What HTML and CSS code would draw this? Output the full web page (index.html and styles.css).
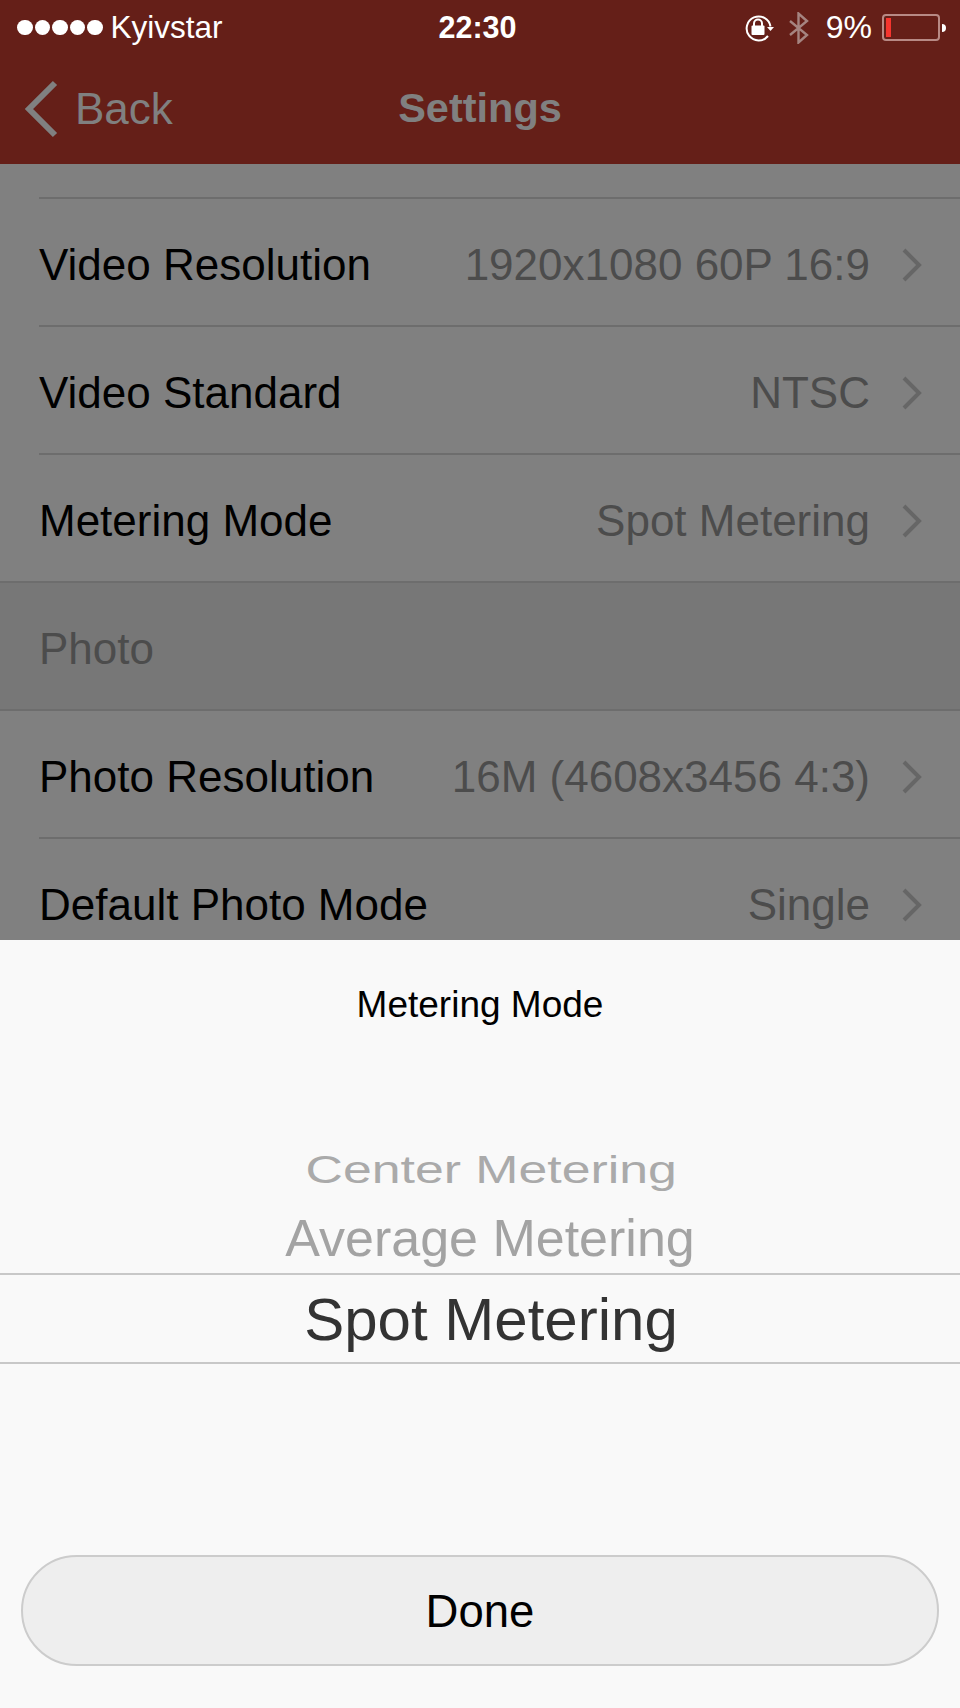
FILE: index.html
```html
<!DOCTYPE html>
<html lang="en">
<head>
  <meta charset="UTF-8" />
  <meta name="viewport" content="width=device-width, initial-scale=1.0"/>
  <title>Settings</title>
  <link rel="stylesheet" href="styles.css">
</head>
<body>
  <!-- status bar + nav -->
  <header class="topbar">
    <div class="statusbar">
      <div class="status-left">
        <span class="signal"><i></i><i></i><i></i><i></i><i></i></span>
        <span class="carrier">Kyivstar</span>
      </div>
      <span class="clock">22:30</span>
      <div class="status-right">
        <svg class="icon-lock" width="30" height="28" viewBox="0 0 30 28" fill="none">
          <path d="M26.500 12.500A12 12 0 1 0 24 22" stroke="#fff" stroke-width="2"/>
          <path d="M23 13h7l-3.500 4z" fill="#fff"/>
          <rect x="7.500" y="11.500" width="13" height="9.500" rx="1" fill="#fff"/>
          <path d="M10 12V9.500a4 4 0 0 1 8 0V12" stroke="#fff" stroke-width="2"/>
        </svg>
        <svg class="icon-bt" width="22" height="32" viewBox="0 0 22 32" fill="none">
          <path d="M2 9l17 14-8.500 7.500V1.500L19 9 2 23" stroke="#a58480" stroke-width="2.400"/>
        </svg>
        <span class="battery-pct">9%</span>
        <span class="battery"><span class="battery-fill"></span></span>
        <span class="battery-tip"></span>
      </div>
    </div>
    <nav class="navbar">
      <a class="back" href="#">
        <svg width="36" height="58" viewBox="0 0 36 58" fill="none">
          <path d="M32 3L6 29l26 26" stroke="#808080" stroke-width="6"/>
        </svg>
        <span>Back</span>
      </a>
      <div class="nav-title">Settings</div>
    </nav>
  </header>

  <!-- dimmed settings list -->
  <main class="settings">
    <div class="row row-stub"></div>
    <div class="row"><span class="row-label">Video Resolution</span><span class="row-value">1920x1080 60P 16:9</span><svg class="chevron" width="22" height="36" viewBox="0 0 22 36" fill="none"><path d="M3 3l15 15L3 33" stroke="#666" stroke-width="4"/></svg></div>
    <div class="row"><span class="row-label">Video Standard</span><span class="row-value">NTSC</span><svg class="chevron" width="22" height="36" viewBox="0 0 22 36" fill="none"><path d="M3 3l15 15L3 33" stroke="#666" stroke-width="4"/></svg></div>
    <div class="row row-end"><span class="row-label">Metering Mode</span><span class="row-value">Spot Metering</span><svg class="chevron" width="22" height="36" viewBox="0 0 22 36" fill="none"><path d="M3 3l15 15L3 33" stroke="#666" stroke-width="4"/></svg></div>
    <div class="row row-end section-head">Photo</div>
    <div class="row"><span class="row-label">Photo Resolution</span><span class="row-value">16M (4608x3456 4:3)</span><svg class="chevron" width="22" height="36" viewBox="0 0 22 36" fill="none"><path d="M3 3l15 15L3 33" stroke="#666" stroke-width="4"/></svg></div>
    <div class="row"><span class="row-label">Default Photo Mode</span><span class="row-value">Single</span><svg class="chevron" width="22" height="36" viewBox="0 0 22 36" fill="none"><path d="M3 3l15 15L3 33" stroke="#666" stroke-width="4"/></svg></div>
  </main>

  <!-- picker sheet -->
  <section class="sheet">
    <div class="sheet-title">Metering Mode</div>
    <div class="picker">
      <div class="picker-item far">Center Metering</div>
      <div class="picker-item near">Average Metering</div>
      <div class="picker-item selected">Spot Metering</div>
    </div>
    <button class="done-btn">Done</button>
  </section>
</body>
</html>
```

FILE: styles.css
```css
:root {
  --red: #651f18;
  --dim: #808080;
  --line: #6d6d6d;
  --sheet: #f9f9f9;
}
html, body {
  margin: 0; padding: 0;
  background: var(--dim);
  font-family: 'Liberation Sans', Arial, sans-serif;
}
body {
  width: 960px;
  height: 1708px;
  display: flex;
  flex-direction: column;
  overflow: hidden;
}
.topbar {
  height: 164px;
  flex: none;
  background: var(--red);
  color: #fff;
}
.statusbar {
  height: 55px;
  display: grid;
  grid-template-columns: 1fr auto 1fr;
  align-items: center;
  padding: 0 14px 0 17px;
  font-size: 31px;
}
.status-left, .status-right {
  display: flex;
  align-items: center;
}
.status-right { justify-content: flex-end; }
.signal {
  display: flex;
  gap: 2px;
  margin-right: 8px;
}
.signal i {
  width: 15.500px; height: 15.500px;
  border-radius: 50%;
  background: #fff;
}
.carrier { font-size: 31.500px; }
.clock {
  font-weight: 700;
  font-size: 30.500px;
  padding-right: 8px;
}
.icon-lock { margin-right: 14px; }
.icon-bt { margin-right: 16px; }
.battery-pct { margin-right: 10px; font-size: 32px; }
.battery {
  width: 50px; height: 19px;
  border: 2px solid #b88a85;
  border-radius: 4px;
  padding: 2px;
  display: flex;
}
.battery-fill {
  width: 5px;
  background: #f6352e;
}
.battery-tip {
  width: 4px; height: 8px;
  background: #fff;
  border-radius: 0 4px 4px 0;
  margin-left: 2px;
}
.navbar {
  height: 109px;
  position: relative;
  display: flex;
  align-items: center;
  justify-content: center;
  color: var(--dim);
}
.back {
  position: absolute;
  left: 23px;
  top: 25px;
  display: flex;
  align-items: center;
  gap: 16px;
  color: var(--dim);
  font-size: 44px;
  text-decoration: none;
}
.nav-title {
  font-size: 41.500px;
  font-weight: 700;
  padding-bottom: 3px;
}
.settings {
  flex: 1;
  min-height: 0;
  overflow: hidden;
}
.row {
  box-sizing: border-box;
  height: 128px;
  padding-top: 5px;
  margin-left: 39px;
  display: flex;
  align-items: center;
  border-bottom: 2px solid var(--line);
  font-size: 44px;
  color: #000;
}
.row-stub { height: 35px; padding-top: 0; }
.row-end {
  margin-left: 0;
  padding-left: 39px;
}
.row-label { flex: 1; }
.row-value {
  color: #4c4c4c;
  margin-right: 31px;
}
.chevron { margin-right: 37px; }
.section-head {
  background: #777;
  color: #4c4c4c;
}
.sheet {
  height: 768px;
  flex: none;
  background: var(--sheet);
  display: flex;
  flex-direction: column;
  align-items: center;
  box-sizing: border-box;
  padding-top: 45px;
}
.sheet-title {
  font-size: 37px;
  color: #000;
  line-height: 40px;
}
.picker {
  width: 100%;
  margin-top: 114px;
  display: flex;
  flex-direction: column;
  align-items: center;
}
.picker-item {
  padding-left: 20px;
  white-space: nowrap;
}
.far {
  font-size: 46px;
  height: 60px;
  line-height: 62px;
  color: #aaa;
  transform: scale(1.126, .85);
}
.near {
  font-size: 52px;
  height: 74px;
  line-height: 78px;
  color: #a3a3a3;
}
.selected {
  box-sizing: border-box;
  width: 100%;
  height: 91px;
  line-height: 89px;
  padding-left: 22px;
  text-align: center;
  font-size: 60px;
  color: #333;
  border-top: 2px solid #c8c8c8;
  border-bottom: 2px solid #c8c8c8;
}
.done-btn {
  width: 918px;
  height: 111px;
  margin-top: auto;
  margin-bottom: 42px;
  padding-top: 3px;
  background: #eee;
  border: 2px solid #ccc;
  border-radius: 56px;
  font-family: inherit;
  font-size: 45.500px;
  color: #000;
}
```
